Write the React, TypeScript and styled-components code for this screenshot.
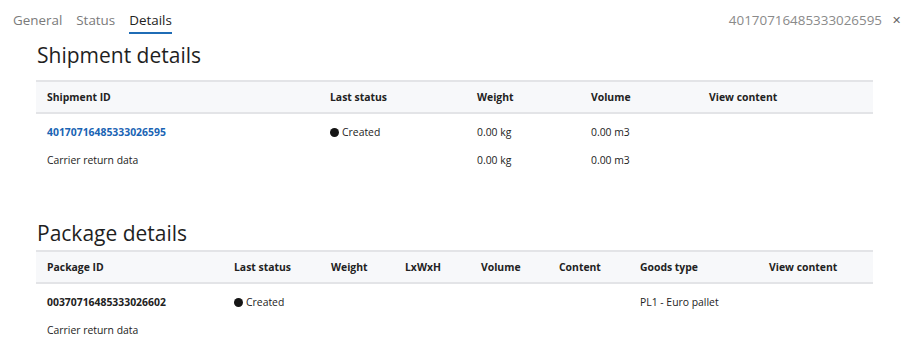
import React from "react";
import styled, { createGlobalStyle } from "styled-components";

const Global = createGlobalStyle`
  html, body { margin: 0; padding: 0; background: #fff; }
  body { font-family: "Open Sans", "Noto Sans", sans-serif; color: #222; }
  * { box-sizing: border-box; }
`;

const Page = styled.div`
  width: 913px;
  height: 354px;
  overflow: hidden;
`;

const TopBar = styled.div`
  display: flex;
  align-items: flex-start;
  justify-content: space-between;
  height: 34px;
  padding: 0 12px 0 13px;
`;

const Tabs = styled.div`
  display: flex;
  gap: 14px;
`;

const Tab = styled.div<{ $active?: boolean }>`
  font-size: 13.4px;
  line-height: 20px;
  padding-top: 10px;
  height: 34px;
  color: ${(p) => (p.$active ? "#222" : "#7a7a7a")};
  border-bottom: 2px solid ${(p) => (p.$active ? "#1f6cb5" : "transparent")};
`;

const RightInfo = styled.div`
  display: flex;
  align-items: center;
  gap: 10px;
  padding-top: 10px;
  font-size: 13.4px;
  line-height: 20px;
  color: #8a8a8a;
`;

const Close = styled.span`
  font-size: 11px;
  color: #666;
`;

const Content = styled.div`
  padding: 0 40px 0 36px;
`;

const Heading = styled.h2<{ $mt: number; $mb: number }>`
  margin: ${(p) => p.$mt}px 0 ${(p) => p.$mb}px 1px;
  font-size: 21px;
  font-weight: 400;
  line-height: 30px;
  color: #1f1f1f;
`;

const Grid = styled.div<{ $cols: string }>`
  display: grid;
  grid-template-columns: ${(p) => p.$cols};
`;

const HeadRow = styled(Grid)`
  height: 34px;
  align-items: center;
  background: #f7f8fa;
  border-top: 2px solid #e3e4e7;
  border-bottom: 2px solid #e3e4e7;
`;

const Body = styled.div`
  padding-top: 4px;
`;

const Row = styled(Grid)`
  height: 28px;
  align-items: center;
`;

const HeadCell = styled.div`
  padding-left: 11px;
  font-size: 10.4px;
  font-weight: 700;
  color: #222;
  white-space: nowrap;
`;

const Cell = styled.div<{ $tone?: "link" | "strong" }>`
  padding-left: 11px;
  font-size: 10.4px;
  white-space: nowrap;
  display: flex;
  align-items: center;
  gap: 3px;
  color: ${(p) => (p.$tone === "link" ? "#1a64b4" : "#222")};
  font-weight: ${(p) => (p.$tone ? 700 : 400)};
`;

const Dot = styled.span`
  display: inline-block;
  width: 9px;
  height: 9px;
  border-radius: 50%;
  background: #151515;
`;

type CellDef = { text: string; tone?: "link" | "strong"; status?: boolean };

function Table({ cols, heads, rows }: { cols: string; heads: string[]; rows: CellDef[][] }) {
  return (
    <div>
      <HeadRow $cols={cols}>
        {heads.map((h) => (
          <HeadCell key={h}>{h}</HeadCell>
        ))}
      </HeadRow>
      <Body>
        {rows.map((r, i) => (
          <Row $cols={cols} key={i}>
            {r.map((c, j) => (
              <Cell key={j} $tone={c.tone}>
                {c.status && <Dot />}
                {c.text}
              </Cell>
            ))}
          </Row>
        ))}
      </Body>
    </div>
  );
}

const e: CellDef = { text: "" };

export default function App() {
  return (
    <Page>
      <Global />
      <TopBar>
        <Tabs>
          <Tab>General</Tab>
          <Tab>Status</Tab>
          <Tab $active>Details</Tab>
        </Tabs>
        <RightInfo>
          <span>40170716485333026595</span>
          <Close>✕</Close>
        </RightInfo>
      </TopBar>
      <Content>
        <Heading $mt={6} $mb={10}>Shipment details</Heading>
        <Table
          cols="283px 147px 114px 118px 1fr"
          heads={["Shipment ID", "Last status", "Weight", "Volume", "View content"]}
          rows={[
            [
              { text: "40170716485333026595", tone: "link" },
              { text: "Created", status: true },
              { text: "0.00 kg" },
              { text: "0.00 m3" },
              e,
            ],
            [{ text: "Carrier return data" }, e, { text: "0.00 kg" }, { text: "0.00 m3" }, e],
          ]}
        />
        <Heading $mt={44} $mb={2}>Package details</Heading>
        <Table
          cols="187px 97px 74px 76px 78px 81px 129px 1fr"
          heads={["Package ID", "Last status", "Weight", "LxWxH", "Volume", "Content", "Goods type", "View content"]}
          rows={[
            [
              { text: "00370716485333026602", tone: "strong" },
              { text: "Created", status: true },
              e,
              e,
              e,
              e,
              { text: "PL1 - Euro pallet" },
              e,
            ],
            [{ text: "Carrier return data" }, e, e, e, e, e, e, e],
          ]}
        />
      </Content>
    </Page>
  );
}
